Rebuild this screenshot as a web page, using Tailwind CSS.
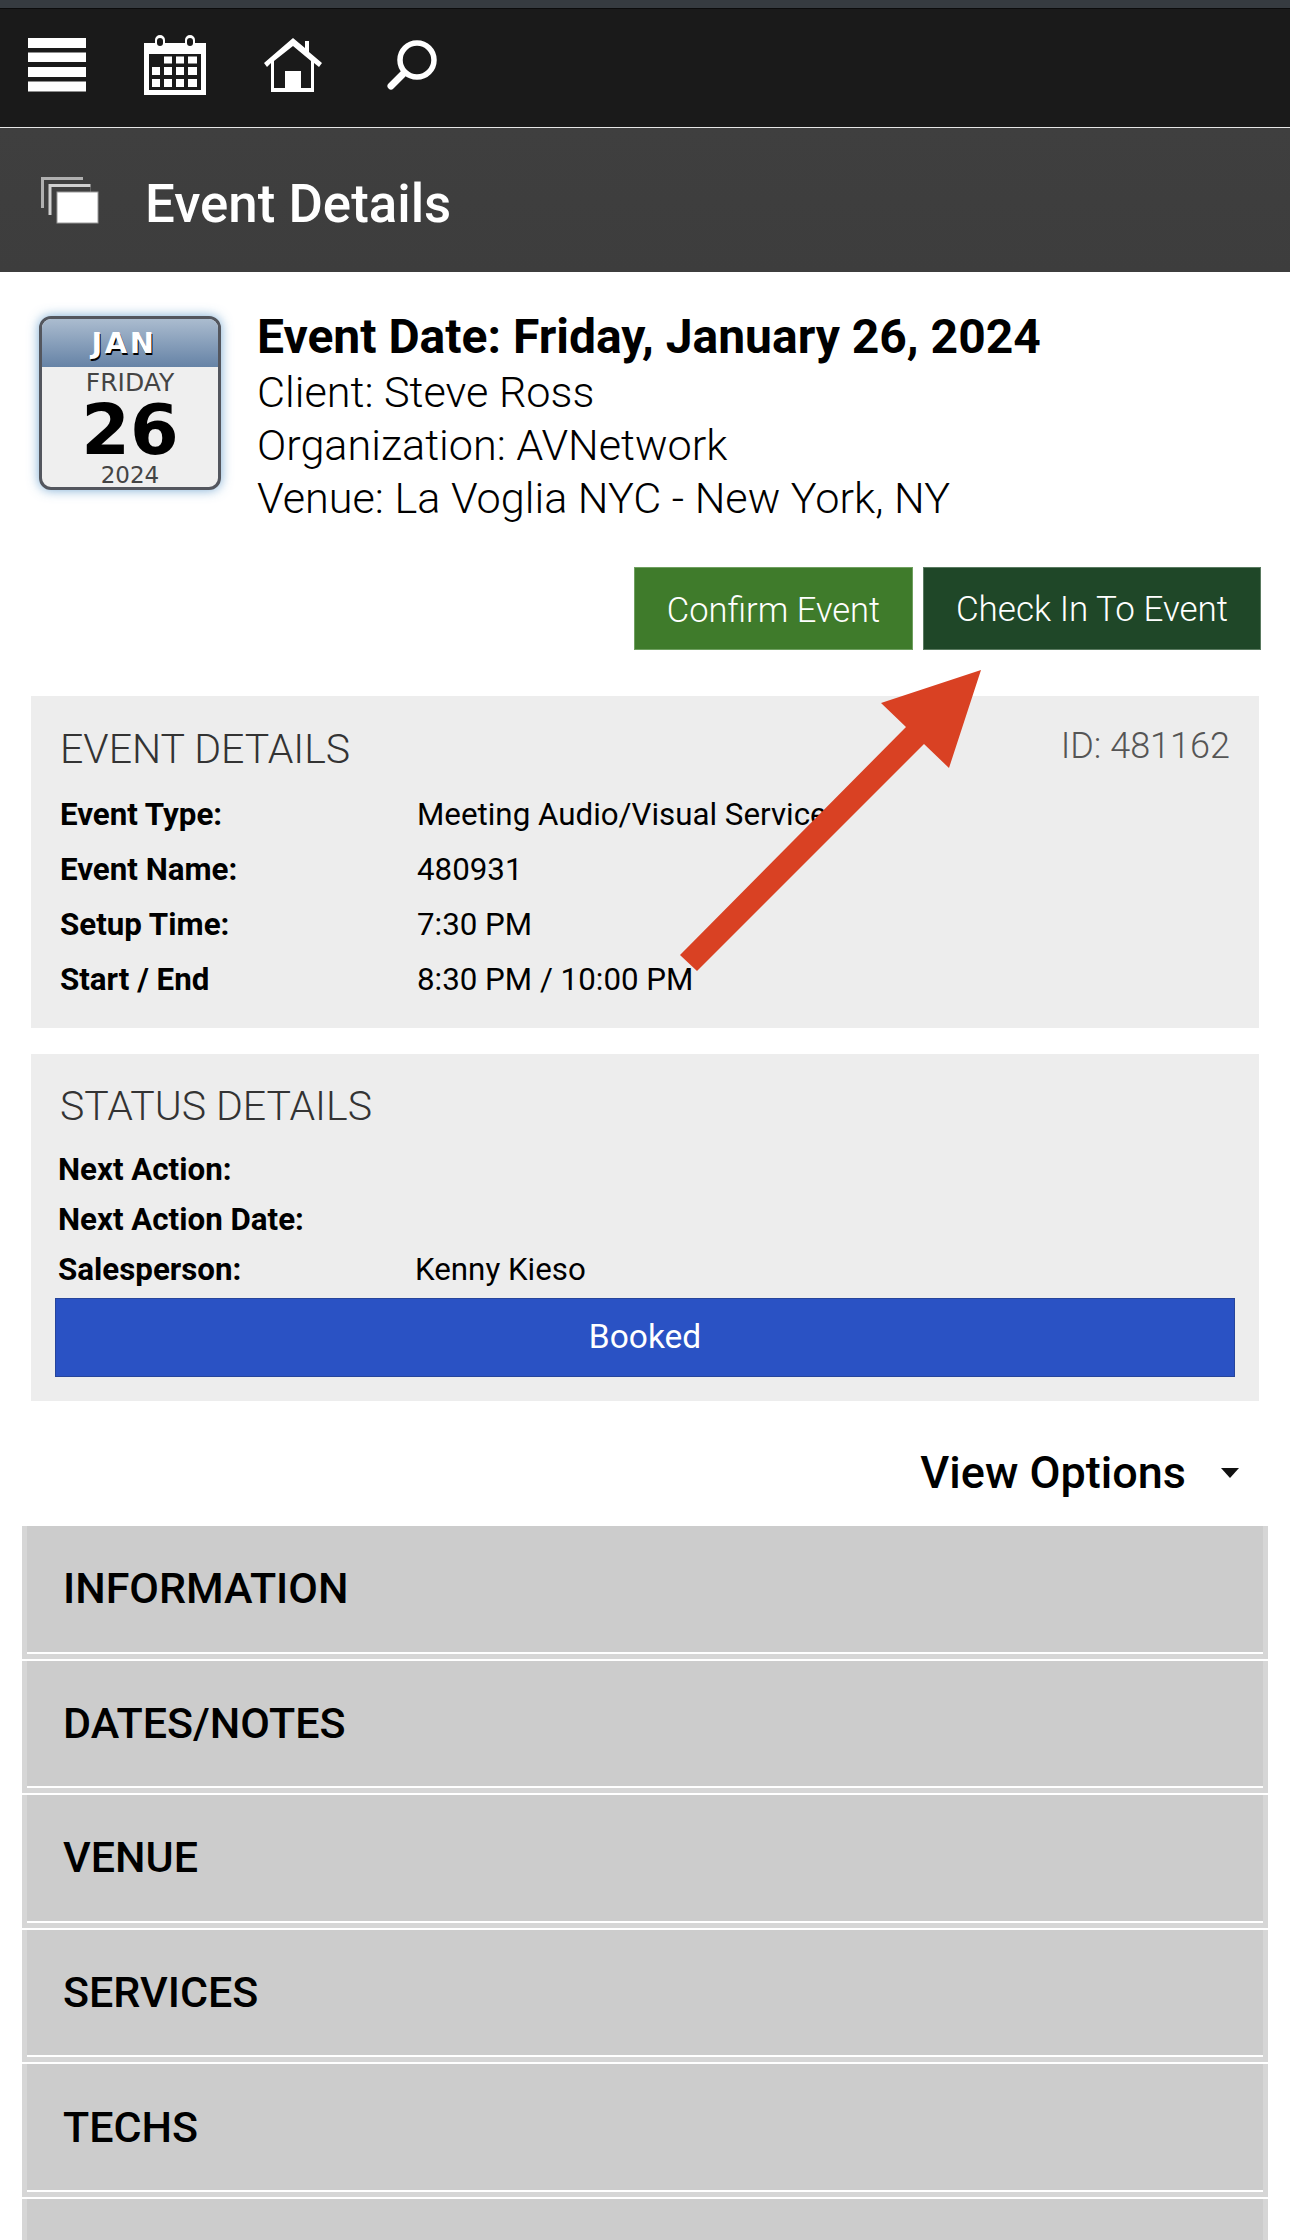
<!DOCTYPE html>
<html>
<head>
<meta charset="utf-8">
<title>Event Details</title>
<script src="https://cdn.jsdelivr.net/npm/@tailwindcss/browser@4"></script>
</head>
<body class="bg-white">
<div class="relative w-[1290px] h-[2240px] overflow-hidden font-['Roboto',sans-serif] text-black">

    <!-- Top nav -->
    <div class="h-[8px] bg-[#363b40]"></div>
    <nav class="h-[120px] bg-[#1a1a1a] border-t border-t-[#0c0c0c] border-b border-b-[#e6e6e6] flex items-start pl-[28px] pt-[26px]">
        <svg class="w-[58px] h-[54px] mt-[3px]" viewBox="0 0 58 54" fill="#fff">
            <rect y="0" width="58" height="10"/><rect y="14.500" width="58" height="9.500"/><rect y="29" width="58" height="10"/><rect y="43.500" width="58" height="10"/>
        </svg>
        <svg class="w-[62px] h-[60px] ml-[58px]" viewBox="0 0 62 60">
            <path fill="#fff" d="M0 8h11V5a5 5 0 0 1 10 0v3h20V5a5 5 0 0 1 10 0v3h11v52H0z"/>
            <rect x="13" y="3" width="6" height="8" rx="3" fill="#1a1a1a"/><rect x="43" y="3" width="6" height="8" rx="3" fill="#1a1a1a"/>
            <rect x="5" y="19" width="52" height="36" fill="#1a1a1a"/>
            <g fill="#fff">
                <rect x="20" y="21.500" width="8" height="7"/><rect x="32" y="21.500" width="8" height="7"/><rect x="44" y="21.500" width="9" height="7"/>
                <rect x="8" y="32" width="8" height="8"/><rect x="20" y="32" width="8" height="8"/><rect x="32" y="32" width="8" height="8"/><rect x="44" y="32" width="9" height="8"/>
                <rect x="8" y="44" width="8" height="8"/><rect x="20" y="44" width="8" height="8"/><rect x="32" y="44" width="8" height="8"/><rect x="44" y="44" width="9" height="8"/>
            </g>
        </svg>
        <svg class="w-[58px] h-[54px] ml-[58px] mt-[3px]" viewBox="0 0 58 54">
            <path fill="#fff" d="M29 0 41 10V3h4v11l13 11-3 4-5-4v29H7V25l-4 4-3-4z"/>
            <path fill="#1a1a1a" d="M29 8 47 23v27H37V33H21v17H10V23z"/>
        </svg>
        <svg class="w-[52px] h-[52px] ml-[64px] mt-[4px]" viewBox="0 0 52 52" fill="none" stroke="#fff" stroke-linecap="round">
            <circle cx="31" cy="21" r="17" stroke-width="5.500"/>
            <path d="M18 34 5 47" stroke-width="7"/>
        </svg>
    </nav>

    <!-- Page title -->
    <header class="h-[144px] bg-gradient-to-b from-[#3f3f3f] to-[#3d3d3d] flex items-center pl-[41px]">
        <svg class="w-[58px] h-[47px]" viewBox="0 0 58 47">
            <rect x="0" y="0" width="42" height="31" fill="#b0b0b0"/>
            <rect x="3" y="3" width="39" height="28" fill="#3f3f3f"/>
            <rect x="7.500" y="7" width="42" height="31" fill="#d0d0d0"/>
            <rect x="10.500" y="10" width="39" height="28" fill="#3f3f3f"/>
            <rect x="16" y="15" width="41" height="31" fill="#fff" stroke="#9a9a9a" stroke-width="1"/>
        </svg>
        <h1 class="ml-[46px] mt-[8px] text-[52.800px] font-medium text-white leading-none">Event Details</h1>
    </header>

    <!-- Date summary -->
    <section class="flex pt-[44px] pl-[39px]">
        <div class="w-[182px] h-[174px] rounded-[12px] border-[3px] border-[#53565e] bg-[#efefef] overflow-hidden shadow-[0_0_12px_rgba(90,150,200,0.8)] flex flex-col items-center font-['DejaVu_Sans',sans-serif] text-[#444]">
            <div class="w-full h-[48px] shrink-0 bg-gradient-to-b from-[#abbccf] to-[#6683a6] flex items-center justify-center pr-[12px] text-[29px] tracking-[2.500px] font-bold text-white leading-none [text-shadow:1px_2px_0_#000]">JAN</div>
            <div class="text-[25px] leading-none mt-[3px]">FRIDAY</div>
            <div class="text-[70px] font-bold text-black leading-none">26</div>
            <div class="text-[23px] leading-none -mt-[1px]">2024</div>
        </div>
        <div class="ml-[36px] -mt-[9px]">
            <h2 class="text-[48px] font-bold leading-[59px]">Event Date: Friday, January 26, 2024</h2>
            <p class="text-[43.200px] font-light leading-[53px]">Client: Steve Ross</p>
            <p class="text-[43.200px] font-light leading-[53px]">Organization: AVNetwork</p>
            <p class="text-[43.200px] font-light leading-[53px]">Venue: La Voglia NYC - New York, NY</p>
        </div>
    </section>

    <!-- Actions -->
    <div class="flex justify-end gap-[10px] pr-[29px] mt-[42px] text-white font-light">
        <button class="w-[279px] h-[83px] pt-[4px] text-[34.500px] bg-[#3f7b2b] border border-[#6fa060]">Confirm Event</button>
        <button class="w-[338px] h-[83px] pt-[4px] text-[35px] bg-[#1f4728] border border-[#5a7a60]">Check In To Event</button>
    </div>

    <!-- Event details -->
    <section class="relative mx-[31px] w-[1228px] h-[332px] mt-[46px] bg-[#ededed] pl-[29px] pt-[29px]">
        <span class="absolute right-[29px] top-[29px] text-[36px] font-light leading-[42px] text-[#555]">ID: 481162</span>
        <h3 class="text-[41px] font-light leading-[48px] text-[#333] uppercase">Event Details</h3>
        <dl class="grid grid-cols-[357px_1fr] auto-rows-[55px] items-center mt-[14px] text-[31.300px] leading-none">
            <dt class="font-bold">Event Type:</dt><dd>Meeting Audio/Visual Services</dd>
            <dt class="font-bold">Event Name:</dt><dd>480931</dd>
            <dt class="font-bold">Setup Time:</dt><dd>7:30 PM</dd>
            <dt class="font-bold">Start / End</dt><dd>8:30 PM / 10:00 PM</dd>
        </dl>
    </section>

    <!-- Status details -->
    <section class="mx-[31px] w-[1228px] h-[347px] mt-[26px] bg-[#ededed] px-[24px] pt-[28px]">
        <h3 class="pl-[5px] text-[41px] font-light leading-[48px] text-[#333] uppercase">Status Details</h3>
        <dl class="grid grid-cols-[357px_1fr] auto-rows-[50px] items-center mt-[15px] pl-[3px] text-[31.300px] leading-none">
            <dt class="font-bold">Next Action:</dt><dd></dd>
            <dt class="font-bold">Next Action Date:</dt><dd></dd>
            <dt class="font-bold">Salesperson:</dt><dd>Kenny Kieso</dd>
        </dl>
        <div class="h-[79px] mt-[3px] bg-[#2a52c4] border border-[#26459b] flex items-center justify-center text-white text-[33.500px]">Booked</div>
    </section>

    <!-- View options -->
    <div class="flex items-center justify-end h-[125px] pr-[51px] pt-[17px]">
        <span class="text-[45px] font-medium leading-none">View Options</span>
        <span class="ml-[35px] mt-[2px] w-0 h-0 border-x-[9px] border-x-transparent border-t-[10px] border-t-[#111]"></span>
    </div>

    <!-- Accordion -->
    <div class="mx-[22px] w-[1246px] flex flex-col gap-[2px]">
        <div class="h-[132.600px] bg-[#d6d6d6] px-[5px] pb-[5px]">
            <div class="h-full bg-[#cccccc] border-b-2 border-b-white flex items-center pl-[36px] text-[43px] font-medium leading-none">INFORMATION</div>
        </div>
        <div class="h-[132.600px] bg-[#d6d6d6] px-[5px] pb-[5px]">
            <div class="h-full bg-[#cccccc] border-b-2 border-b-white flex items-center pl-[36px] text-[43px] font-medium leading-none">DATES/NOTES</div>
        </div>
        <div class="h-[132.600px] bg-[#d6d6d6] px-[5px] pb-[5px]">
            <div class="h-full bg-[#cccccc] border-b-2 border-b-white flex items-center pl-[36px] text-[43px] font-medium leading-none">VENUE</div>
        </div>
        <div class="h-[132.600px] bg-[#d6d6d6] px-[5px] pb-[5px]">
            <div class="h-full bg-[#cccccc] border-b-2 border-b-white flex items-center pl-[36px] text-[43px] font-medium leading-none">SERVICES</div>
        </div>
        <div class="h-[132.600px] bg-[#d6d6d6] px-[5px] pb-[5px]">
            <div class="h-full bg-[#cccccc] border-b-2 border-b-white flex items-center pl-[36px] text-[43px] font-medium leading-none">TECHS</div>
        </div>
        <div class="h-[132.600px] bg-[#d6d6d6] px-[5px] pb-[5px]">
            <div class="h-full bg-[#cccccc]"></div>
        </div>
    </div>

    <!-- Callout arrow over the page -->
    <svg class="absolute left-0 top-0 w-[1290px] h-[2240px] pointer-events-none" viewBox="0 0 1290 2240">
        <polygon fill="#d94123" points="981,670 949,768 924,744 697,971 680,955 906,727 881,703"/>
    </svg>
</div>
</body>
</html>
